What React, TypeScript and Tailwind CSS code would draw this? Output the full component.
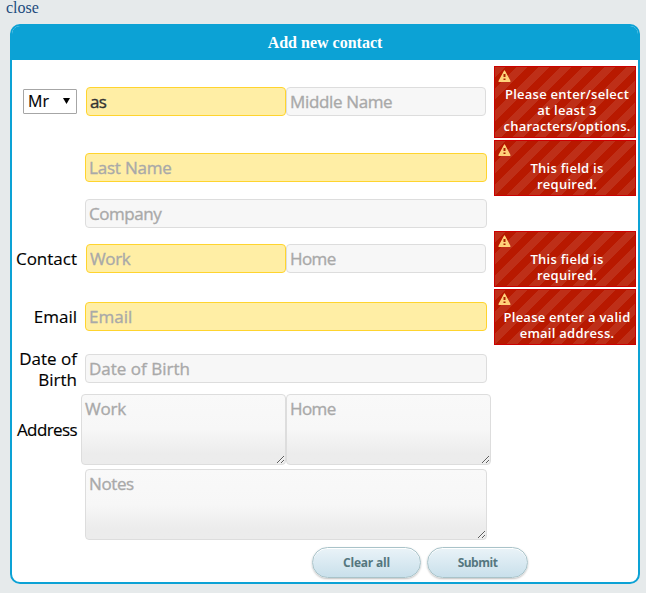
import React from "react";

const field =
  "block h-[29px] rounded-[4px] border px-[3px] text-[17px] outline-none [-webkit-text-stroke:0.35px] placeholder:text-[#a9a9a9] placeholder:opacity-100";
const plain = "border-[#dddddd] bg-[#f7f7f7] text-[#333333]";
const invalid = "border-[#ffd42e] bg-[#ffeea5] text-[#333333]";
const area =
  "block h-[71px] resize rounded-[4px] border border-[#dddddd] bg-linear-to-b from-[#f9f9f9] from-0% via-[#f7f7f7] via-50% to-[#ececec] to-85% px-[3px] py-[3px] text-[17px] leading-[22px] outline-none [-webkit-text-stroke:0.35px] placeholder:text-[#a9a9a9] placeholder:opacity-100";

function Row({
  className,
  label,
  labelClass = "",
  children,
  error,
}: {
  className: string;
  label?: React.ReactNode;
  labelClass?: string;
  children: React.ReactNode;
  error?: React.ReactNode;
}) {
  const lift = error ? "pb-px" : "";
  return (
    <div className={`grid grid-cols-[65px_418px_142px] items-center ${className}`}>
      <div className={`text-right text-[17px] leading-[21px] text-black [-webkit-text-stroke:0.15px] ${lift} ${labelClass}`}>{label}</div>
      <div className={`flex justify-center ${lift}`}>{children}</div>
      {error}
    </div>
  );
}

function ErrorBox({ children }: { children: React.ReactNode }) {
  return (
    <div className="-ml-px h-full w-[142px] border border-[#cc0000] bg-[#b81900] bg-[linear-gradient(135deg,#be2f18_25%,transparent_25%,transparent_50%,#be2f18_50%,#be2f18_75%,transparent_75%)] bg-[size:22px_22px] text-[13px] leading-4 font-semibold tracking-[0.25px] text-white">
      <svg className="mt-[3px] ml-[3px] block" width="13" height="12" viewBox="0 0 13 12">
        <path d="M6.5 1 12 11.3H1Z" fill="#ffd27a" stroke="#ffd27a" strokeWidth="1.2" strokeLinejoin="round" />
        <path d="M5.5 4h2v3h-2zM5.5 8.5h2v1.5h-2z" fill="#a82000" />
      </svg>
      <div className="mt-1 ml-[4px] text-center whitespace-nowrap">{children}</div>
    </div>
  );
}

export default function App() {
  return (
    <div className="h-[593px] w-[646px] overflow-hidden bg-[#e6eaeb] font-['Open_Sans','Noto_Sans',sans-serif]">
      <a className="block h-6 pl-[6px] font-['Liberation_Serif',serif] text-[16px] leading-[15px] text-[#1c4a7d]">close</a>
      <form className="ml-[10px] flex h-[560px] w-[630px] flex-col overflow-hidden rounded-[10px] border-2 border-[#0ca2d5] bg-white">
        <h1 className="h-[34px] shrink-0 bg-[#0ca2d5] text-center font-['Liberation_Serif',serif] text-[16px] leading-[34px] font-bold text-white">
          Add new contact
        </h1>
        <Row
          className="mt-[6px] h-[72px]"
          label={
            <span className="ml-[11px] flex h-[25px] w-[54px] items-center justify-between rounded-[1px] border border-[#a6a6a6] pr-[6px] pl-1 text-[16px]">
              Mr
              <svg className="mb-px" width="7" height="6" viewBox="0 0 7 6"><path d="M0 0h7L3.5 6Z" /></svg>
            </span>
          }
          error={<ErrorBox>Please enter/select<br />at least 3<br />characters/options.</ErrorBox>}
        >
          <input className={`${field} ${invalid} w-[200px] tracking-[-0.8px]`} defaultValue="as" />
          <input className={`${field} ${plain} w-[200px] tracking-[-0.35px]`} placeholder="Middle Name" />
        </Row>
        <Row className="mt-[2px] h-[56px]" error={<ErrorBox>This field is<br />required.</ErrorBox>}>
          <input className={`${field} ${invalid} w-[402px] tracking-[-0.2px]`} placeholder="Last Name" />
        </Row>
        <Row className="mt-[3px] h-[29px]">
          <input className={`${field} ${plain} w-[402px] tracking-[-0.45px]`} placeholder="Company" />
        </Row>
        <Row className="mt-[3px] h-[56px]" label="Contact" error={<ErrorBox>This field is<br />required.</ErrorBox>}>
          <input className={`${field} ${invalid} w-[200px] tracking-[-0.35px]`} placeholder="Work" />
          <input className={`${field} ${plain} w-[200px] tracking-[-0.6px]`} placeholder="Home" />
        </Row>
        <Row className="mt-[2px] h-[56px]" label="Email" error={<ErrorBox>Please enter a valid<br />email address.</ErrorBox>}>
          <input className={`${field} ${invalid} w-[402px]`} placeholder="Email" />
        </Row>
        <Row className="mt-[2px] h-[43px]" label={<>Date of<br />Birth</>}>
          <input className={`${field} ${plain} w-[402px]`} placeholder="Date of Birth" />
        </Row>
        <Row className="mt-1 h-[71px]" label="Address" labelClass="tracking-[-0.6px]">
          <textarea className={`${area} w-[205px] tracking-[-0.2px]`} placeholder="Work" />
          <textarea className={`${area} w-[205px] tracking-[-0.6px]`} placeholder="Home" />
        </Row>
        <Row className="mt-1 h-[71px]">
          <textarea className={`${area} w-[402px] tracking-[-0.4px]`} placeholder="Notes" />
        </Row>
        <div className="mt-[7px] ml-[300px] flex gap-[6px] text-[12px] font-bold text-[#55777f]">
          <button type="button" className="h-[31px] w-[109px] rounded-full border border-[#a9c3c9] bg-linear-to-b from-[#eaf3f8] to-[#c9e0eb] tracking-[-0.2px] shadow-[0_1px_2px_rgba(0,0,0,0.25),inset_0_1px_0_white]">Clear all</button>
          <button type="button" className="h-[31px] w-[101px] rounded-full border border-[#a9c3c9] bg-linear-to-b from-[#eaf3f8] to-[#c9e0eb] tracking-[-0.5px] shadow-[0_1px_2px_rgba(0,0,0,0.25),inset_0_1px_0_white]">Submit</button>
        </div>
      </form>
    </div>
  );
}
